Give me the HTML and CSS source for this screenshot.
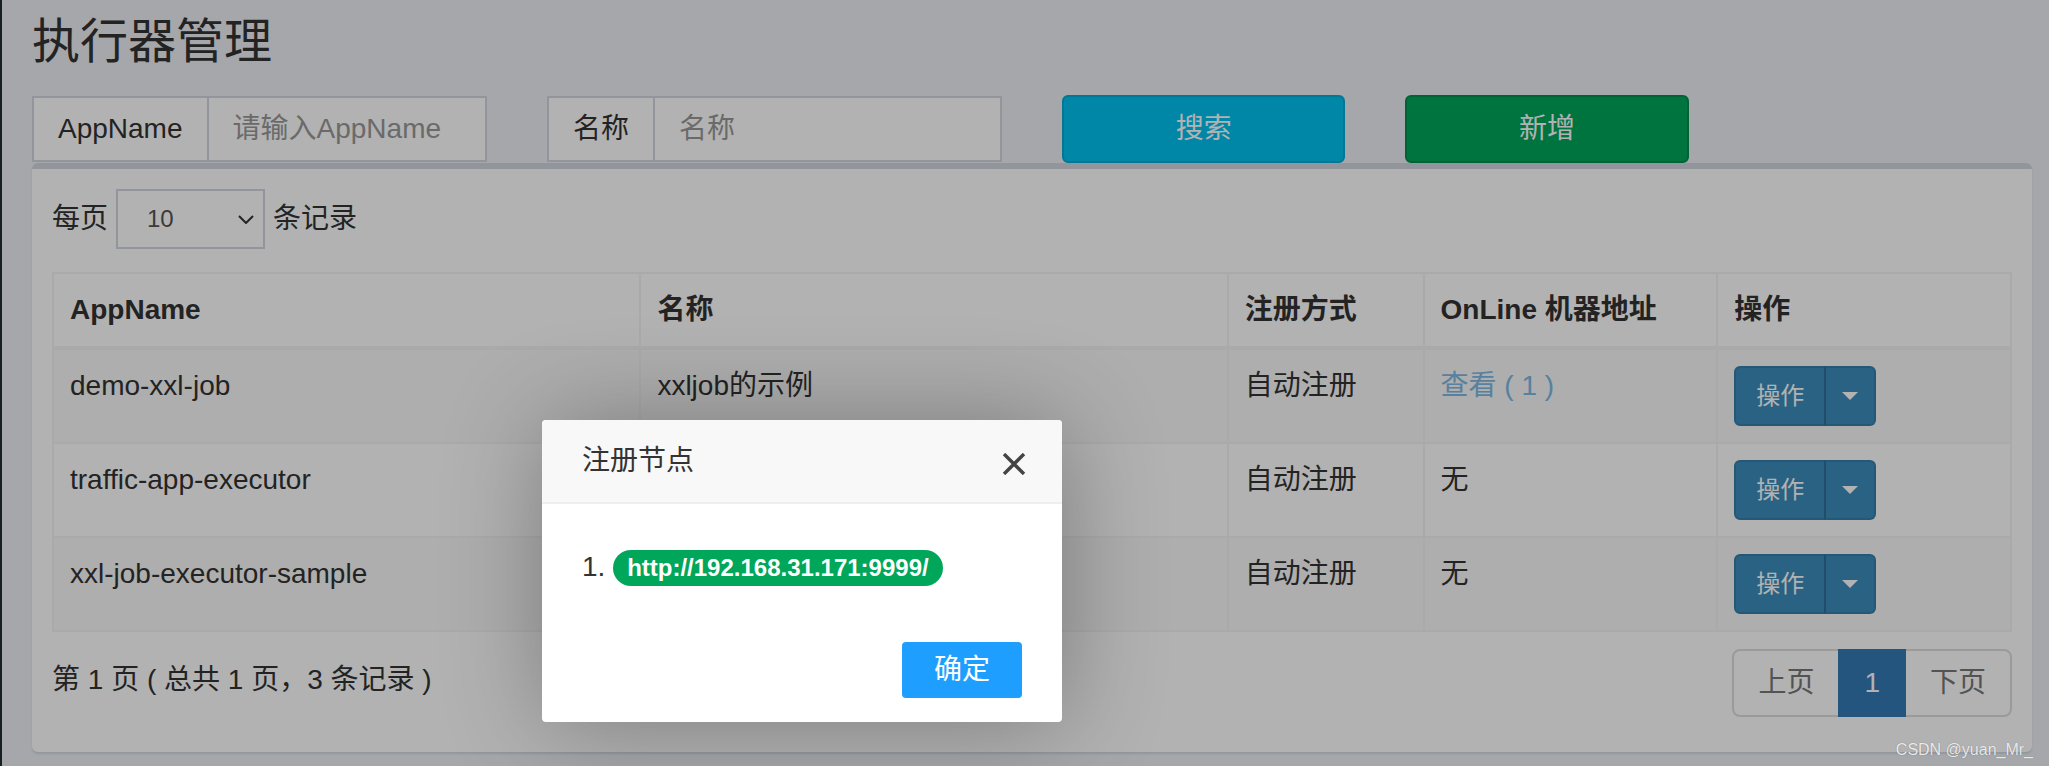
FILE: index.html
```html
<!DOCTYPE html>
<html lang="zh-CN">
<head>
<meta charset="utf-8">
<title>执行器管理</title>
<link rel="stylesheet" href="styles.css">
</head>
<body>
<div class="wrapper">
  <aside class="sidebar"></aside>
  <main class="content">
    <h1 class="page-title">执行器管理</h1>
    <div class="filter-row">
      <div class="col col-3">
        <div class="input-group">
          <span class="addon">AppName</span>
          <input class="field" type="text" placeholder="请输入AppName">
        </div>
      </div>
      <div class="col col-3">
        <div class="input-group">
          <span class="addon">名称</span>
          <input class="field" type="text" placeholder="名称">
        </div>
      </div>
      <div class="col col-2"><button class="btn btn-info">搜索</button></div>
      <div class="col col-2"><button class="btn btn-success">新增</button></div>
    </div>

    <section class="box">
      <div class="length">
        <span>每页</span>
        <span class="select"><span>10</span>
          <svg class="chevron" width="16" height="9" viewBox="0 0 16 9"><path d="M1 1 L8 8 L15 1" fill="none" stroke="#333" stroke-width="2"/></svg>
        </span>
        <span>条记录</span>
      </div>

      <table class="grid">
        <colgroup>
          <col class="c-name"><col class="c-title"><col class="c-type"><col class="c-addr"><col class="c-op">
        </colgroup>
        <thead>
          <tr><th>AppName</th><th>名称</th><th>注册方式</th><th>OnLine 机器地址</th><th>操作</th></tr>
        </thead>
        <tbody>
          <tr>
            <td>demo-xxl-job</td><td>xxljob的示例</td><td>自动注册</td>
            <td><a class="link">查看 ( 1 )</a></td>
            <td><div class="btn-group"><button class="btn-op">操作</button><button class="btn-caret"><span class="caret"></span></button></div></td>
          </tr>
          <tr>
            <td>traffic-app-executor</td><td></td><td>自动注册</td>
            <td>无</td>
            <td><div class="btn-group"><button class="btn-op">操作</button><button class="btn-caret"><span class="caret"></span></button></div></td>
          </tr>
          <tr>
            <td>xxl-job-executor-sample</td><td></td><td>自动注册</td>
            <td>无</td>
            <td><div class="btn-group"><button class="btn-op">操作</button><button class="btn-caret"><span class="caret"></span></button></div></td>
          </tr>
        </tbody>
      </table>

      <div class="table-footer">
        <div class="info">第 1 页 ( 总共 1 页，3 条记录 )</div>
        <ul class="pagination">
          <li class="disabled"><span>上页</span></li>
          <li class="active"><span>1</span></li>
          <li class="disabled"><span>下页</span></li>
        </ul>
      </div>
    </section>
  </main>
</div>

<div class="shade"></div>

<div class="layer">
  <div class="layer-title">
    <span>注册节点</span>
    <svg class="close" width="24" height="22" viewBox="0 0 24 22"><path d="M2 1 L22 21 M22 1 L2 21" stroke="#444" stroke-width="3.4" fill="none"/></svg>
  </div>
  <div class="layer-content">1. <span class="badge">http://192.168.31.171:9999/</span></div>
  <div class="layer-btn"><a class="btn-ok">确定</a></div>
</div>

<div class="watermark">CSDN @yuan_Mr_</div>
</body>
</html>
```

FILE: styles.css
```css
* { box-sizing: border-box; }
html, body { margin: 0; padding: 0; }
body {
  width: 2049px;
  height: 766px;
  overflow: hidden;
  position: relative;
  background: #ecf0f5;
  font-family: "Liberation Sans", "Noto Sans CJK SC", sans-serif;
  font-size: 28px;
  line-height: 40px;
  color: #333;
}
.wrapper { display: flex; height: 766px; }
.sidebar { width: 2px; flex: none; background: #222d32; }
.content { flex: 1; padding: 15px 17px 0 30px; }

.page-title {
  margin: 0;
  font-size: 48px;
  font-weight: 400;
  line-height: 53px;
  color: #333;
}

.filter-row { display: flex; margin: 27px -30px 0; align-items: flex-start; }
.col { padding: 0 30px; }
.col-3 { width: 25%; }
.col-2 { width: 16.6667%; }

.input-group { display: flex; height: 66px; margin-top: 1px; }
.addon {
  display: flex; align-items: center;
  padding: 0 24px;
  border: 2px solid #d2d6de;
  background: #fff;
  color: #333;
  white-space: nowrap;
}
.field {
  flex: 1; min-width: 0;
  border: 2px solid #d2d6de; border-left: 0;
  padding: 0 24px;
  background: #fff;
  font: inherit; color: #555;
  outline: none;
}
.field::placeholder { color: #999; }

.btn {
  display: block; width: 100%; height: 68px;
  border: 2px solid; border-radius: 6px;
  font: inherit; color: #fff;
}
.btn-info { background: #00c0ef; border-color: #00acd6; }
.btn-success { background: #00a65a; border-color: #008d4c; }

.box {
  background: #fff;
  border-top: 6px solid #d2d6de;
  border-radius: 6px;
  box-shadow: 0 2px 2px rgba(0,0,0,.1);
  padding: 20px 20px 35px;
}

.length { display: flex; align-items: center; gap: 8px; height: 60px; }
.select {
  display: flex; align-items: center; justify-content: space-between;
  width: 149px; height: 60px;
  border: 2px solid #d2d6de;
  padding: 0 9px 0 29px;
  font-size: 24px; color: #555;
}

.grid {
  width: 100%;
  margin-top: 23px;
  border-collapse: collapse;
  table-layout: fixed;
  border: 2px solid #f4f4f4;
}
.c-name, .c-title { width: 30%; }
.c-type { width: 10%; }
.c-addr, .c-op { width: 15%; }
.grid th, .grid td {
  border: 2px solid #f4f4f4;
  padding: 16px;
  text-align: left;
  vertical-align: top;
  line-height: 40px;
  white-space: nowrap;
}
.grid thead th { border-bottom-width: 4px; font-weight: 700; }
.grid tbody tr:nth-child(odd) { background: #f9f9f9; }
.link { color: #7db9e2; text-decoration: none; }

.btn-group { display: inline-flex; }
.btn-op, .btn-caret {
  background: #3c8dbc;
  border: 2px solid #367fa9;
  color: #fff;
  font: inherit; font-size: 24px; line-height: 36px;
  padding: 10px 20px;
}
.btn-op { border-radius: 6px 0 0 6px; }
.btn-caret {
  display: flex; align-items: center;
  padding: 10px 16px;
  margin-left: -2px;
  border-radius: 0 6px 6px 0;
  border-left-color: #2e6f95;
}
.caret {
  display: block; width: 0; height: 0;
  border-top: 8px solid #fff;
  border-left: 8px solid transparent;
  border-right: 8px solid transparent;
}

.table-footer { display: flex; justify-content: space-between; align-items: flex-start; margin-top: 17px; }
.info { padding-top: 11px; }
.pagination { display: flex; list-style: none; margin: 0; padding: 0; }
.pagination li span {
  display: block;
  padding: 12px 24px;
  line-height: 40px;
  border: 2px solid #ddd;
  margin-left: -2px;
  background: #fff;
  color: #777;
}
.pagination li:first-child span { margin-left: 0; border-radius: 8px 0 0 8px; }
.pagination li:last-child span { border-radius: 0 8px 8px 0; }
.pagination li.active span {
  position: relative;
  background: #337ab7; border-color: #337ab7; color: #fff;
}

.shade { position: absolute; inset: 0; background: rgba(0,0,0,.3); }

.layer {
  position: absolute; left: 542px; top: 420px; width: 520px;
  background: #fff;
  border-radius: 4px;
  box-shadow: 2px 2px 100px rgba(0,0,0,.3);
}
.layer-title {
  height: 84px;
  display: flex; align-items: center; justify-content: space-between;
  padding: 0 36px 0 40px;
  background: #f8f8f8;
  border-bottom: 2px solid #eee;
  border-radius: 4px 4px 0 0;
  line-height: 82px;
  color: #333;
}
.close { margin-top: 6px; }
.layer-content { padding: 43px 40px 40px; color: #333; }
.badge {
  display: inline-block;
  padding: 6px 14px;
  font-size: 24px; font-weight: 700; line-height: 24px;
  color: #fff; background: #00a65a;
  border-radius: 18px;
}
.layer-btn { display: flex; justify-content: flex-end; padding: 15px 40px 24px; }
.btn-ok {
  display: block; height: 56px; line-height: 56px;
  padding: 0 32px;
  background: #1e9fff; color: #fff;
  border-radius: 4px;
}

.watermark {
  position: absolute; right: 16px; bottom: 8px;
  font-family: "Liberation Sans Narrow", "Liberation Sans", sans-serif;
  font-size: 16px; line-height: 16px;
  color: rgba(255,255,255,.85);
  text-shadow: 0 0 1px rgba(0,0,0,.35);
}
```
